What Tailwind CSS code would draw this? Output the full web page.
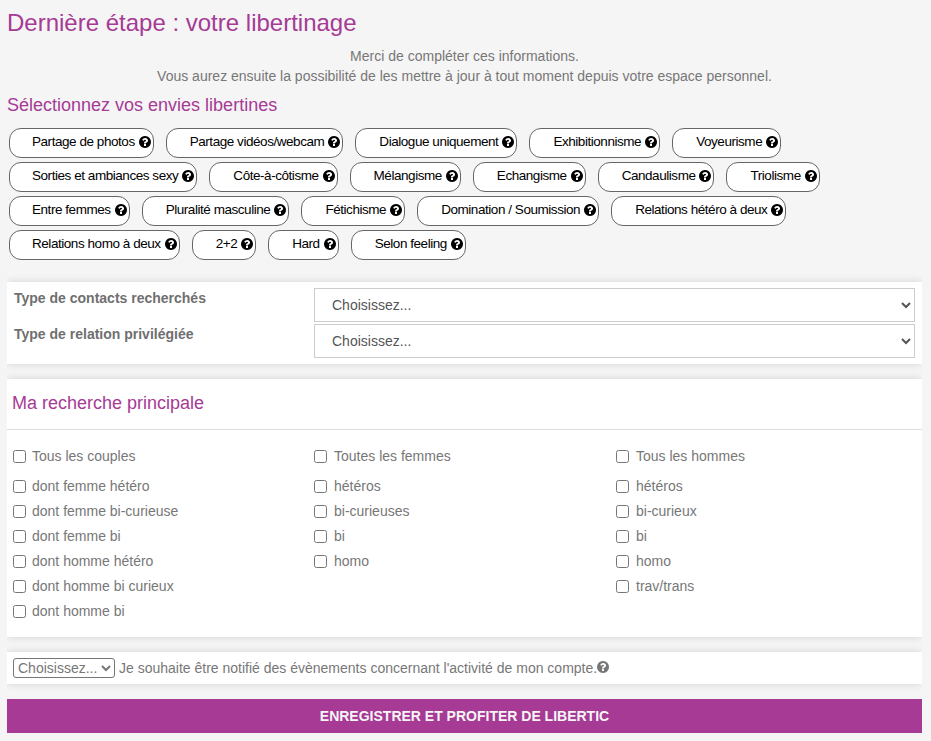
<!DOCTYPE html>
<html lang="fr">

<head>
  <meta charset="UTF-8">
  <title>Dernière étape</title>
  <script src="https://cdn.jsdelivr.net/npm/@tailwindcss/browser@4"></script>
</head>

<body class="bg-[#f5f5f5] font-['Liberation_Sans',Arial,sans-serif] text-[14px] leading-[20px] text-[#777]">
  <svg class="hidden">
    <symbol id="q" viewBox="0 0 1536 1536">
      <path transform="translate(0 -128)" d="M896 1376v-192q0-14-9-23t-23-9h-192q-14 0-23 9t-9 23v192q0 14 9 23t23 9h192q14 0 23-9t9-23zm256-672q0-88-55.500-163t-138.500-116-170-41q-243 0-371 213-15 24 8 42l132 100q7 6 19 6 16 0 25-12 53-68 86-92 34-24 86-24 48 0 85.500 26t37.500 59q0 38-20 61t-68 45q-63 28-115.500 86.500t-52.500 125.500v36q0 14 9 23t23 9h192q14 0 23-9t9-23q0-19 21.500-49.500t54.500-49.500q32-18 49-28.500t46-35 44.500-48 28-60.500 12.500-81zm384 192q0 209-103 385.500t-279.500 279.500-385.500 103-385.500-103-279.500-279.500-103-385.500 103-385.500 279.500-279.500 385.500-103 385.500 103 279.500 279.500 103 385.500z" />
    </symbol>
  </svg>

  <main class="ml-[7px] mr-[9px] h-[741px] overflow-hidden">
    <h1 class="pt-[9px] text-[24px] leading-[28px] text-[#a63a95]">Dernière étape : votre libertinage</h1>

    <div class="mt-[9px] text-center">
      <p>Merci de compléter ces informations.</p>
      <p>Vous aurez ensuite la possibilité de les mettre à jour à tout moment depuis votre espace personnel.</p>
    </div>

    <h2 class="mt-[9px] text-[18px] leading-[20px] text-[#a63a95]">Sélectionnez vos envies libertines</h2>

    <!-- envies -->
    <div class="mt-[13px] ml-[2px] flex flex-wrap gap-x-3 gap-y-1 text-[13.5px] tracking-[-0.45px] text-black">
      <span class="flex h-[30px] items-center rounded-[12px] border border-[#666] bg-white pb-[2px] pl-[22px] pr-[2px]">Partage de photos<svg class="ml-1 h-3 w-3 fill-black"><use href="#q" /></svg></span>
      <span class="flex h-[30px] items-center rounded-[12px] border border-[#666] bg-white pb-[2px] pl-[23px] pr-[2px]">Partage vidéos/webcam<svg class="ml-1 h-3 w-3 fill-black"><use href="#q" /></svg></span>
      <span class="flex h-[30px] items-center rounded-[12px] border border-[#666] bg-white pb-[2px] pl-[23px] pr-[2px]">Dialogue uniquement<svg class="ml-1 h-3 w-3 fill-black"><use href="#q" /></svg></span>
      <span class="flex h-[30px] items-center rounded-[12px] border border-[#666] bg-white pb-[2px] pl-[23px] pr-[2px]">Exhibitionnisme<svg class="ml-1 h-3 w-3 fill-black"><use href="#q" /></svg></span>
      <span class="flex h-[30px] items-center rounded-[12px] border border-[#666] bg-white pb-[2px] pl-[23px] pr-[2px]">Voyeurisme<svg class="ml-1 h-3 w-3 fill-black"><use href="#q" /></svg></span>
      <span class="flex h-[30px] items-center rounded-[12px] border border-[#666] bg-white pb-[2px] pl-[22px] pr-[2px]">Sorties et ambiances sexy<svg class="ml-1 h-3 w-3 fill-black"><use href="#q" /></svg></span>
      <span class="flex h-[30px] items-center rounded-[12px] border border-[#666] bg-white pb-[2px] pl-[23px] pr-[2px]">Côte-à-côtisme<svg class="ml-1 h-3 w-3 fill-black"><use href="#q" /></svg></span>
      <span class="flex h-[30px] items-center rounded-[12px] border border-[#666] bg-white pb-[2px] pl-[23px] pr-[2px]">Mélangisme<svg class="ml-1 h-3 w-3 fill-black"><use href="#q" /></svg></span>
      <span class="flex h-[30px] items-center rounded-[12px] border border-[#666] bg-white pb-[2px] pl-[23px] pr-[2px]">Echangisme<svg class="ml-1 h-3 w-3 fill-black"><use href="#q" /></svg></span>
      <span class="flex h-[30px] items-center rounded-[12px] border border-[#666] bg-white pb-[2px] pl-[23px] pr-[2px]">Candaulisme<svg class="ml-1 h-3 w-3 fill-black"><use href="#q" /></svg></span>
      <span class="flex h-[30px] items-center rounded-[12px] border border-[#666] bg-white pb-[2px] pl-[23px] pr-[2px]">Triolisme<svg class="ml-1 h-3 w-3 fill-black"><use href="#q" /></svg></span>
      <span class="flex h-[30px] items-center rounded-[12px] border border-[#666] bg-white pb-[2px] pl-[22px] pr-[2px]">Entre femmes<svg class="ml-1 h-3 w-3 fill-black"><use href="#q" /></svg></span>
      <span class="flex h-[30px] items-center rounded-[12px] border border-[#666] bg-white pb-[2px] pl-[23px] pr-[2px]">Pluralité masculine<svg class="ml-1 h-3 w-3 fill-black"><use href="#q" /></svg></span>
      <span class="flex h-[30px] items-center rounded-[12px] border border-[#666] bg-white pb-[2px] pl-[23px] pr-[2px]">Fétichisme<svg class="ml-1 h-3 w-3 fill-black"><use href="#q" /></svg></span>
      <span class="flex h-[30px] items-center rounded-[12px] border border-[#666] bg-white pb-[2px] pl-[23px] pr-[2px]">Domination / Soumission<svg class="ml-1 h-3 w-3 fill-black"><use href="#q" /></svg></span>
      <span class="flex h-[30px] items-center rounded-[12px] border border-[#666] bg-white pb-[2px] pl-[23px] pr-[2px]">Relations hétéro à deux<svg class="ml-1 h-3 w-3 fill-black"><use href="#q" /></svg></span>
      <span class="flex h-[30px] items-center rounded-[12px] border border-[#666] bg-white pb-[2px] pl-[22px] pr-[2px]">Relations homo à deux<svg class="ml-1 h-3 w-3 fill-black"><use href="#q" /></svg></span>
      <span class="flex h-[30px] items-center rounded-[12px] border border-[#666] bg-white pb-[2px] pl-[23px] pr-[2px]">2+2<svg class="ml-1 h-3 w-3 fill-black"><use href="#q" /></svg></span>
      <span class="flex h-[30px] items-center rounded-[12px] border border-[#666] bg-white pb-[2px] pl-[23px] pr-[2px]">Hard<svg class="ml-1 h-3 w-3 fill-black"><use href="#q" /></svg></span>
      <span class="flex h-[30px] items-center rounded-[12px] border border-[#666] bg-white pb-[2px] pl-[23px] pr-[2px]">Selon feeling<svg class="ml-1 h-3 w-3 fill-black"><use href="#q" /></svg></span>
    </div>

    <!-- type de contacts -->
    <section class="mt-[22px] bg-white px-[7px] py-[6px] shadow-[0_0_8px_rgba(0,0,0,0.14)]">
      <div class="grid grid-cols-[300px_1fr] gap-y-[2px] font-bold text-[#6f6f6f]">
        <label>Type de contacts recherchés</label>
        <select class="h-[34px] w-full border border-[#ccc] bg-white pl-[13px] font-normal text-[#555]">
          <option>Choisissez...</option>
        </select>
        <label>Type de relation privilégiée</label>
        <select class="h-[34px] w-full border border-[#ccc] bg-white pl-[13px] font-normal text-[#555]">
          <option>Choisissez...</option>
        </select>
      </div>
    </section>

    <!-- recherche -->
    <section class="mt-[15px] h-[258px] bg-white shadow-[0_0_8px_rgba(0,0,0,0.14)]">
      <h3 class="h-[51px] border-b border-[#ddd] px-[5px] pt-[14px] text-[18px] leading-[20px] text-[#a63a95]">Ma recherche principale</h3>
      <div class="grid grid-cols-[301px_302px_1fr] px-[6px] pt-[16px]">
        <div class="flex flex-col">
          <label class="mb-[10px] flex h-[20px] items-center gap-[6px]"><input type="checkbox" class="m-0">Tous les couples</label>
          <label class="mb-[5px] flex h-[20px] items-center gap-[6px]"><input type="checkbox" class="m-0">dont femme hétéro</label>
          <label class="mb-[5px] flex h-[20px] items-center gap-[6px]"><input type="checkbox" class="m-0">dont femme bi-curieuse</label>
          <label class="mb-[5px] flex h-[20px] items-center gap-[6px]"><input type="checkbox" class="m-0">dont femme bi</label>
          <label class="mb-[5px] flex h-[20px] items-center gap-[6px]"><input type="checkbox" class="m-0">dont homme hétéro</label>
          <label class="mb-[5px] flex h-[20px] items-center gap-[6px]"><input type="checkbox" class="m-0">dont homme bi curieux</label>
          <label class="mb-[5px] flex h-[20px] items-center gap-[6px]"><input type="checkbox" class="m-0">dont homme bi</label>
        </div>
        <div class="flex flex-col">
          <label class="mb-[10px] flex h-[20px] items-center gap-[7px]"><input type="checkbox" class="m-0">Toutes les femmes</label>
          <label class="mb-[5px] flex h-[20px] items-center gap-[7px]"><input type="checkbox" class="m-0">hétéros</label>
          <label class="mb-[5px] flex h-[20px] items-center gap-[7px]"><input type="checkbox" class="m-0">bi-curieuses</label>
          <label class="mb-[5px] flex h-[20px] items-center gap-[7px]"><input type="checkbox" class="m-0">bi</label>
          <label class="mb-[5px] flex h-[20px] items-center gap-[7px]"><input type="checkbox" class="m-0">homo</label>
        </div>
        <div class="flex flex-col">
          <label class="mb-[10px] flex h-[20px] items-center gap-[7px]"><input type="checkbox" class="m-0">Tous les hommes</label>
          <label class="mb-[5px] flex h-[20px] items-center gap-[7px]"><input type="checkbox" class="m-0">hétéros</label>
          <label class="mb-[5px] flex h-[20px] items-center gap-[7px]"><input type="checkbox" class="m-0">bi-curieux</label>
          <label class="mb-[5px] flex h-[20px] items-center gap-[7px]"><input type="checkbox" class="m-0">bi</label>
          <label class="mb-[5px] flex h-[20px] items-center gap-[7px]"><input type="checkbox" class="m-0">homo</label>
          <label class="mb-[5px] flex h-[20px] items-center gap-[7px]"><input type="checkbox" class="m-0">trav/trans</label>
        </div>
      </div>
    </section>

    <!-- notifications -->
    <section class="mt-[15px] flex h-[32px] items-center bg-white px-[6px] shadow-[0_0_8px_rgba(0,0,0,0.14)]">
      <select class="h-[20px] w-[102px] rounded-[3px] border border-[#767676] bg-white text-[#777]">
        <option>Choisissez...</option>
      </select>
      <span class="ml-1">Je souhaite être notifié des évènements concernant l'activité de mon compte.</span>
      <svg class="h-3 w-3 -translate-y-px fill-[#777]"><use href="#q" /></svg>
    </section>

    <button type="submit" class="mt-[15px] h-[34px] w-full bg-[#a63a95] text-[14px] font-bold text-[#f5f5f5]">ENREGISTRER ET PROFITER DE LIBERTIC</button>
  </main>
</body>

</html>
